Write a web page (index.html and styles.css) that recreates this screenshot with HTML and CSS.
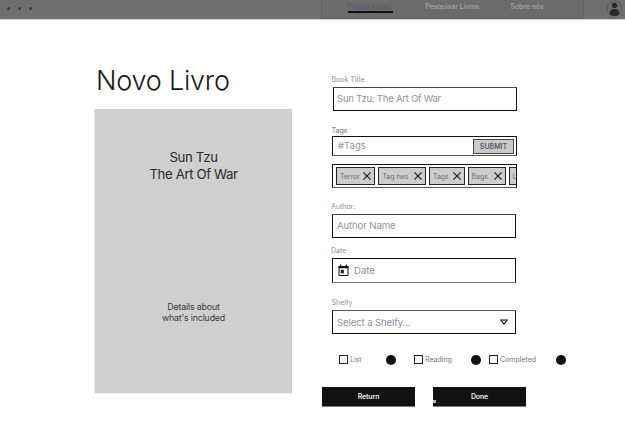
FILE: index.html
```html
<!DOCTYPE html>
<html lang="pt">
<head>
<meta charset="utf-8">
<title>Novo Livro</title>
<link rel="stylesheet" href="styles.css">
</head>
<body>
<header class="topbar">
  <div class="dots"><i></i><i></i><i></i></div>
  <nav class="nav">
    <a class="active"><span>Página Inicial</span></a>
    <a class="search"><span>Pesquisar Livros</span></a>
    <a class="about"><span>Sobre nós</span></a>
  </nav>
  <svg class="avatar" width="17" height="17" viewBox="0 0 17 17"><circle cx="8.5" cy="8.5" r="7.4" fill="none" stroke="#505050" stroke-width=".8"/><circle cx="8.5" cy="5.4" r="2.7" fill="#292929"/><path d="M3.8 14.7v-1.6q0-4 4.7-4t4.7 4v1.6q-4.7 2-9.4 0z" fill="#292929"/></svg>
</header>
<main class="page">
  <section class="preview">
    <h1><span>Novo Livro</span></h1>
    <div class="cover">
      <p class="cover-title"><span class="t1">Sun Tzu</span><br><span class="t2">The Art Of War</span></p>
      <p class="cover-text"><span>Details about</span><br><span>what's included</span></p>
    </div>
  </section>
  <form class="form">
    <label class="label l-title"><span>Book Title</span></label>
    <div class="field f-title"><span class="v-title">Sun Tzu: The Art Of War</span></div>
    <label class="label l-tags"><span>Tags</span></label>
    <div class="field f-tags"><span class="v-tags">#Tags</span><button type="button" class="submit"><span>SUBMIT</span></button></div>
    <div class="field taglist">
      <div class="tag w1"><span>Terror</span><svg viewBox="0 0 8 8"><path d="M.4.4l7.2 7.2M7.6.4L.4 7.6"/></svg></div>
      <div class="tag w2"><span>Tag two</span><svg viewBox="0 0 8 8"><path d="M.4.4l7.2 7.2M7.6.4L.4 7.6"/></svg></div>
      <div class="tag w3"><span>Tags</span><svg viewBox="0 0 8 8"><path d="M.4.4l7.2 7.2M7.6.4L.4 7.6"/></svg></div>
      <div class="tag w4"><span>Bags</span><svg viewBox="0 0 8 8"><path d="M.4.4l7.2 7.2M7.6.4L.4 7.6"/></svg></div>
      <div class="tag w5"><span>L</span></div>
    </div>
    <label class="label l-author"><span>Author:</span></label>
    <div class="field low f-author"><span class="v-author">Author Name</span></div>
    <label class="label l-date"><span>Date</span></label>
    <div class="field low f-date">
      <svg class="calendar" width="11" height="13" viewBox="0 0 11 13"><path d="M1 2.5h9v9H1z" fill="none" stroke="#111"/><path d="M.5 2h10v2.2H.5zM2 .4h1.3v2H2zM7.7.4H9v2H7.7z" fill="#111"/><path d="M2.7 5.8h3.2v3.5H2.7z" fill="#222"/></svg>
      <span class="v-date">Date</span>
    </div>
    <label class="label l-shelf"><span>Shelfy</span></label>
    <div class="field low f-shelf"><span class="v-shelf">Select a Shelfy...</span><svg class="caret" width="8" height="6" viewBox="0 0 8 6"><path d="M.9 1h6.2L4 5z" fill="none" stroke="#111" stroke-width="1.1"/></svg></div>
    <div class="options">
      <label class="option o1"><i class="box"></i><span>List</span><i class="bullet"></i></label>
      <label class="option o2"><i class="box"></i><span>Reading</span><i class="bullet"></i></label>
      <label class="option o3"><i class="box"></i><span>Completed</span><i class="bullet"></i></label>
    </div>
    <div class="actions">
      <button type="button"><span>Return</span></button>
      <button type="button" class="done"><span>Done</span></button>
    </div>
  </form>
</main>
</body>
</html>
```

FILE: styles.css
```css
* { box-sizing: border-box; }
body {
  margin: 0;
  width: 625px;
  height: 430px;
  overflow: hidden;
  background: #fff;
  color: #171717;
  font-family: Inter, "Liberation Sans", sans-serif;
}
p, h1 { margin: 0; }
span { white-space: nowrap; }
button { font-family: inherit; padding: 0; border: 0; border-radius: 0; }

.topbar {
  display: flex;
  height: 20px;
  background: linear-gradient(#6f6f6f 19px, #d0d0d0 19px);
}
.dots { display: flex; gap: 7.5px; width: 321px; padding: 7px 0 0 7px; }
.dots i { width: 3.4px; height: 3.4px; border-radius: 50%; background: #3a3a3a; }
.nav {
  display: flex;
  width: 263px;
  height: 19px;
  padding-left: 25.5px;
  background: #6b6b6b;
  border: solid #606060;
  border-width: 0 1px 1px;
  font-size: 7px;
  font-weight: 500;
  line-height: 13px;
  letter-spacing: -0.08px;
  color: #a0a5b5;
}
.nav .active { width: 45px; height: 13px; border-bottom: 2px solid #111; color: #535c72; }
.nav .search { margin-left: 33px; width: 85px; }
.avatar { margin-left: 21.7px; }

.page { display: flex; }
.preview { width: 197px; margin-left: 95px; padding-top: 43px; }
h1 { height: 46px; padding-left: 1px; font-size: 27px; font-weight: 300; line-height: 36px; letter-spacing: -0.22px; }
.cover {
  height: 284px;
  padding-top: 40px;
  background: #cfcfcf;
  text-align: center;
  box-shadow: -1px 0 #ececec, 0 1px #f4f4f4;
}
.cover-title { font-size: 13.2px; line-height: 17px; height: 152px; letter-spacing: -0.38px; color: #2a2a2a; }
.cover-text { font-size: 8.8px; line-height: 11px; letter-spacing: -0.16px; color: #3a3a3a; }

.form { width: 250px; margin-left: 30px; padding: 54px 0 0 9px; }
.label { display: block; height: 10px; padding-left: 0.5px; font-size: 7px; line-height: 10px; color: #8a90a3; }
.field {
  display: flex;
  align-items: center;
  width: 185px;
  height: 25px;
  margin-left: 1px;
  padding-left: 4px;
  border: 1px solid #111;
  font-size: 9.6px;
  color: #8c93a6;
}
.low { width: 184px; letter-spacing: -0.12px; }
.f-title { width: 184px; height: 24px; margin-left: 2px; margin-top: 2px; padding-left: 3px; border-top-color: #444; }
.v-title { letter-spacing: -0.28px; }
.v-title, .v-author { margin-top: -1px; }
.l-title { margin-top: 1px; }
.l-tags { margin-top: 15px; font-weight: 500; color: #7f8799; }
.f-tags { height: 20px; padding-left: 5px; justify-content: space-between; padding-right: 2px; border-bottom-color: #555; }
.v-tags { margin-top: -1px; }
.submit {
  width: 41px;
  height: 15px;
  border: 1px solid #444;
  background: #c9c9c9;
  color: #565d6d;
  font-size: 7px;
  font-weight: 600;
  line-height: 13px;
}
.taglist { height: 24px; margin-top: 8px; padding-left: 3px; gap: 3px; overflow: hidden; border-bottom-color: #555; }
.tag {
  display: flex;
  flex: none;
  align-items: center;
  justify-content: space-between;
  height: 18px;
  padding: 0 3px;
  border: 1px solid #252525;
  background: #cdcdcd;
  color: #687083;
  font-size: 7px;
  letter-spacing: -0.05px;
}
.tag svg { width: 8px; height: 8px; fill: none; stroke: #151515; stroke-width: 1.1; }
.w1 { width: 39.4px; }
.w2 { width: 47.6px; }
.w3 { width: 35.6px; }
.w4 { width: 38px; }
.w5 { width: 38px; }
.l-author { margin-top: 14px; }
.f-author { height: 24px; margin-top: 2px; border-top-color: #444; }
.l-date { margin-top: 8px; }
.f-date { margin-top: 2px; border-bottom-color: #777; }
.v-date { letter-spacing: 0; }
.calendar { margin: 0 5px 0 1px; }
.l-shelf { margin-top: 15px; }
.f-shelf { height: 24px; margin-top: 2px; justify-content: space-between; padding-right: 7px; border-top-color: #555; }
.label.l-author, .label.l-date { margin-left: -0.5px; }

.options { display: flex; height: 11px; margin-top: 20px; padding-left: 8px; }
.option { display: flex; align-items: center; font-size: 7px; line-height: 11px; color: #6f7788; }
.box { width: 9px; height: 9px; margin-right: 2px; border: 1px solid #222; }
.bullet { width: 10px; height: 10px; margin-left: auto; border-radius: 50%; background: #111; }
.o1 { width: 57px; }
.o2 { width: 67px; margin-left: 18px; }
.o3 { width: 77px; margin-left: 8px; }
.actions { display: flex; gap: 18px; margin: 22px 0 0 -9px; }
.actions button {
  width: 93px;
  height: 20px;
  background: #111;
  border-bottom: 1px solid #777;
  color: #eee;
  font-size: 7px;
  font-weight: 600;
  line-height: 19px;
  letter-spacing: -0.15px;
}
.actions .done { position: relative; }
.done::before {
  content: "";
  position: absolute;
  left: 0;
  bottom: 3px;
  width: 3px;
  height: 3px;
  background: #bbb;
}
```
